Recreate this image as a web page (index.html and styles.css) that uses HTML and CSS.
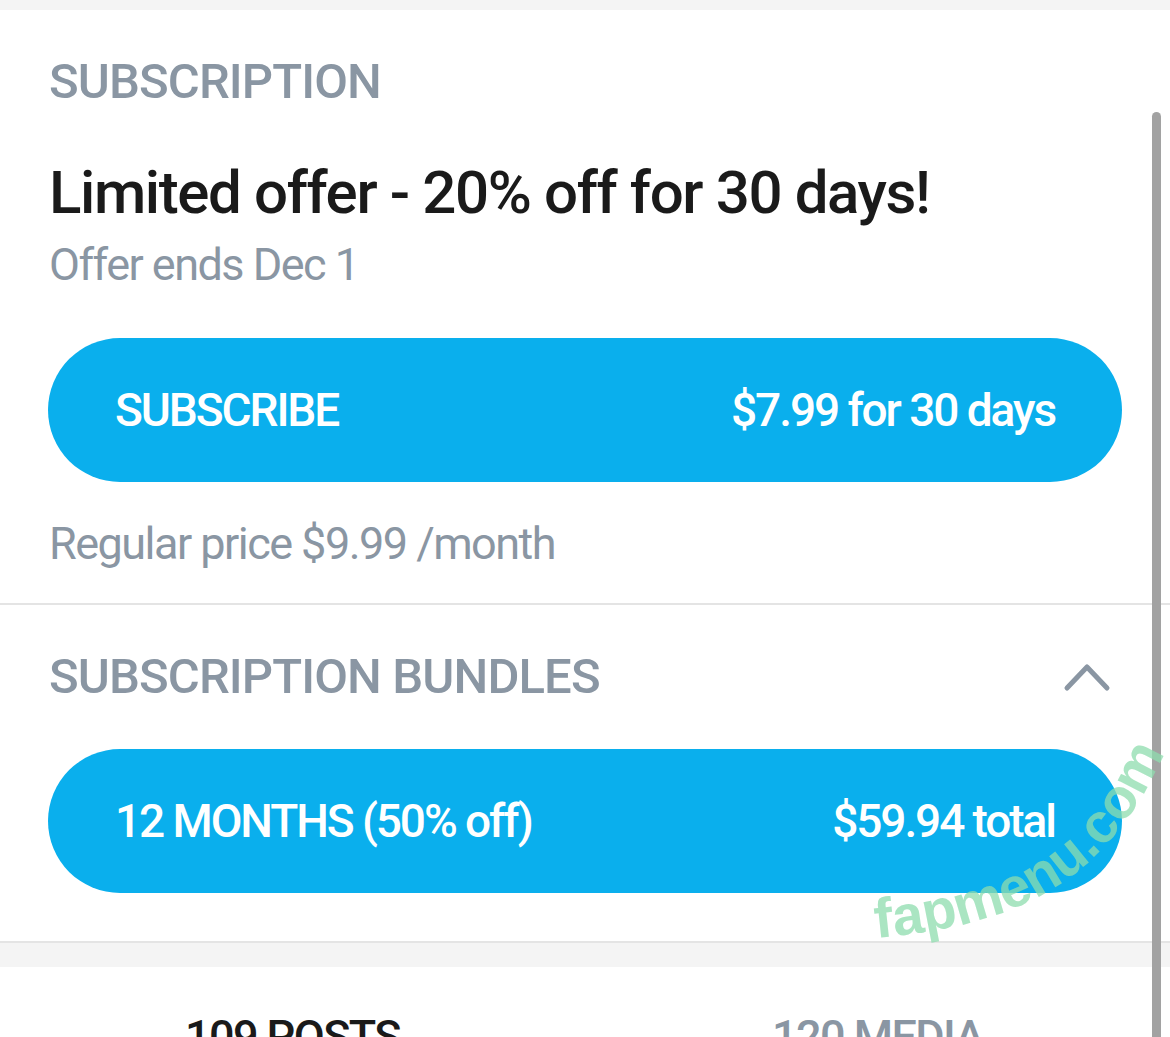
FILE: index.html
```html
<!DOCTYPE html>
<html lang="en">
<head>
  <meta charset="UTF-8" />
  <meta name="viewport" content="width=device-width, initial-scale=1.0"/>
  <title>Subscription</title>
  <link rel="stylesheet" href="styles.css">
</head>
<body>
  <div class="card">
    <section class="block">
      <div class="label">SUBSCRIPTION</div>
      <h1 class="offer-title">Limited offer - 20% off for 30 days!</h1>
      <div class="muted">Offer ends Dec 1</div>
      <button class="pill pill-first">
        <span>SUBSCRIBE</span>
        <span class="pill-price">$7.99 for 30 days</span>
      </button>
      <div class="muted regular">Regular price $9.99 /month</div>
    </section>

    <section class="block bundles">
      <div class="block-head">
        <div class="label">SUBSCRIPTION BUNDLES</div>
        <svg class="chevron" width="48" height="30" viewBox="0 0 48 30">
          <polyline points="4,26 24,5 44,26" fill="none" stroke="#8a96a3" stroke-width="5" stroke-linecap="round" stroke-linejoin="round"/>
        </svg>
      </div>
      <button class="pill">
        <span>12 MONTHS (50% off)</span>
        <span class="pill-price">$59.94 total</span>
      </button>
    </section>
  </div>

  <div class="gap"></div>

  <nav class="tabs">
    <a href="#" class="tab active">109 POSTS</a>
    <a href="#" class="tab">120 MEDIA</a>
  </nav>

  <div class="scrollbar"></div>

  <svg class="watermark" width="1170" height="1037" viewBox="0 0 1170 1037">
    <path id="wm-arc" d="M 876 938 C 1010 925, 1110 890, 1172 735" fill="none"/>
    <text font-family="'Liberation Sans', Arial, sans-serif" font-weight="700" font-size="56" fill="#8ddcae" fill-opacity="0.75">
      <textPath href="#wm-arc">fapmenu.com</textPath>
    </text>
  </svg>
</body>
</html>
```

FILE: styles.css
```css
body {
  margin: 0;
  padding-top: 10px;
  background: #f4f4f4;
  font-family: Roboto, "Noto Sans", sans-serif;
  color: #1a1a1a;
  overflow: hidden;
  height: 1037px;
  position: relative;
}
.card {
  background: #ffffff;
}
.block {
  padding: 42px 48px 32px 49px;
  border-bottom: 2px solid #e4e4e4;
}
.bundles {
  padding-bottom: 48px;
}
.label {
  font-size: 49px;
  line-height: 59px;
  font-weight: 500;
  color: #8a96a3;
  letter-spacing: -0.018em;
}
.offer-title {
  margin: 46px 0 0;
  font-size: 60px;
  line-height: 72px;
  font-weight: 500;
  color: #1a1a1a;
  letter-spacing: -0.023em;
}
.muted {
  margin-top: 9px;
  font-size: 45px;
  line-height: 54px;
  color: #8a96a3;
  letter-spacing: -0.034em;
}
.regular {
  margin-top: 35px;
}
.pill {
  display: flex;
  align-items: center;
  justify-content: space-between;
  width: 1074px;
  height: 144px;
  margin: 46px 0 0 -1px;
  padding: 0 67px;
  border: none;
  border-radius: 72px;
  background: #0aafed;
  color: #ffffff;
  font-family: inherit;
  font-size: 46px;
  font-weight: 500;
  letter-spacing: -0.045em;
  box-sizing: border-box;
}
.block-head {
  display: flex;
  align-items: center;
  justify-content: space-between;
}
.chevron {
  margin-right: 11px;
}
.bundles .pill {
  margin-top: 43px;
}
.gap {
  height: 24px;
}
.tabs {
  display: flex;
  background: #ffffff;
  padding-top: 43px;
  height: 200px;
}
.tab {
  flex: 1;
  text-align: center;
  text-decoration: none;
  font-size: 45px;
  line-height: 54px;
  font-weight: 500;
  color: #8a96a3;
  letter-spacing: -0.035em;
}
.tab.active {
  color: #1a1a1a;
}
.scrollbar {
  position: absolute;
  left: 1152px;
  top: 112px;
  width: 9px;
  height: 1000px;
  border-radius: 5px;
  background: #a2a2a2;
}
.watermark {
  position: absolute;
  left: 0;
  top: 0;
  pointer-events: none;
}
```
